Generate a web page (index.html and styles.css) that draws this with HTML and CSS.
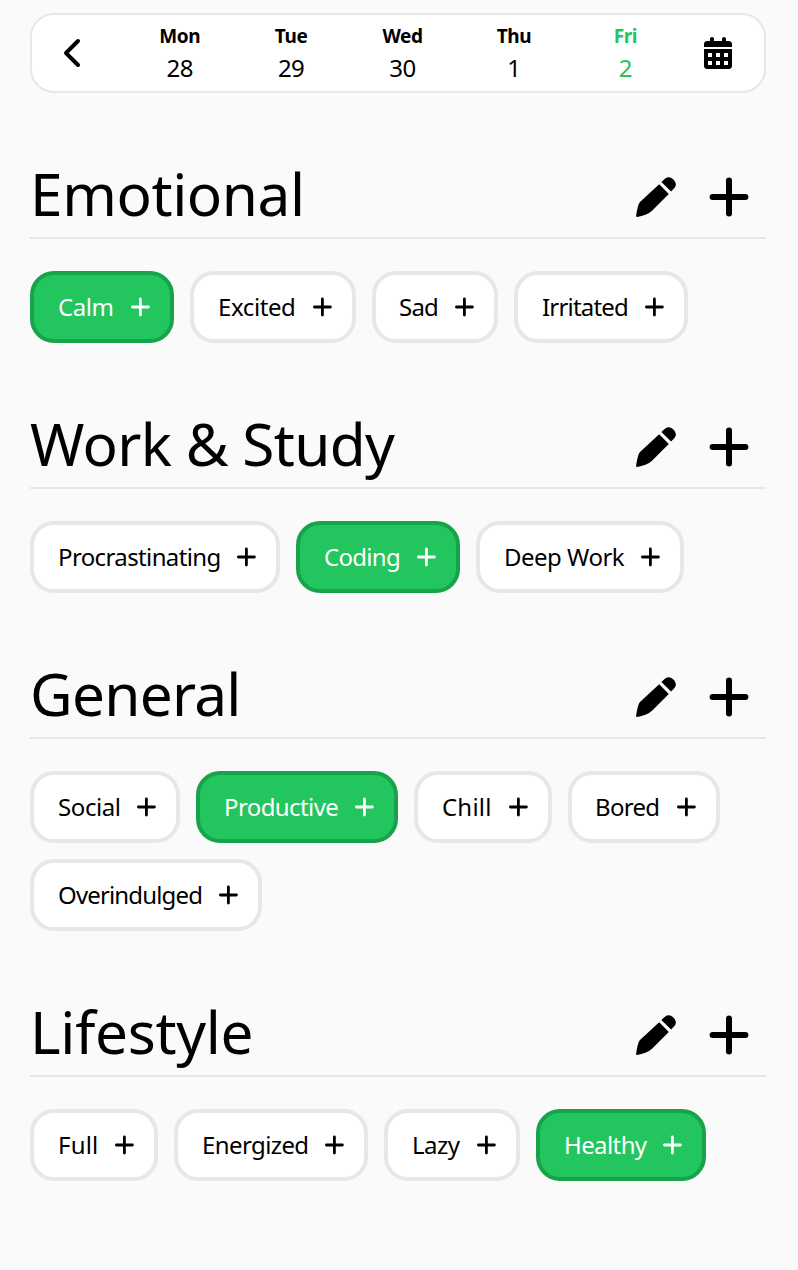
FILE: index.html
```html
<!DOCTYPE html>
<html lang="en">
<head>
<meta charset="utf-8">
<title>Mood tracker</title>
<link rel="stylesheet" href="styles.css">
</head>
<body>
<svg class="sprite" aria-hidden="true">
  <symbol id="plus" viewBox="0 0 20 20"><path d="M10.400 2V18M2.400 10H18.400" fill="none" stroke="currentColor" stroke-width="2.8" stroke-linecap="round"/></symbol>
  <symbol id="plus-lg" viewBox="0 0 40 40"><path d="M20 3.600V36.400M3.600 20H36.400" fill="none" stroke="currentColor" stroke-width="6" stroke-linecap="round"/></symbol>
  <symbol id="pencil" viewBox="0 0 40 40"><path d="M23.200 7.200L32.800 16.900L16 33.700C12.500 37 7 39 1.200 39.900Q-.1 40.100 .1 38.800C1 33.500 2 26.500 4.500 24.500ZM25.400 5L28.300 2.200C31.300-.6 34.500-.4 37.100 2.300C40.400 5.500 40.700 8.900 38 11.600L35.100 14.600Z"/></symbol>
</svg>
<main class="page">
  <nav class="week">
    <svg class="week-prev" viewBox="0 0 320 512"><path d="M9.400 233.400c-12.500 12.500-12.500 32.800 0 45.300l192 192c12.500 12.500 32.800 12.500 45.300 0s12.500-32.800 0-45.300L77.300 256 246.600 86.600c12.500-12.500 12.500-32.800 0-45.300s-32.800-12.500-45.300 0l-192 192z"/></svg>
    <div class="days">
      <div class="day"><b>Mon</b><span>28</span></div>
      <div class="day"><b>Tue</b><span>29</span></div>
      <div class="day"><b>Wed</b><span>30</span></div>
      <div class="day"><b>Thu</b><span>1</span></div>
      <div class="day today"><b>Fri</b><span>2</span></div>
    </div>
    <svg class="week-calendar" viewBox="0 0 448 512"><path fill-rule="evenodd" d="M128 0c17.700 0 32 14.300 32 32V64H288V32c0-17.700 14.300-32 32-32s32 14.300 32 32V64h48c26.500 0 48 21.500 48 48v48H0V112C0 85.500 21.500 64 48 64H96V32c0-17.700 14.300-32 32-32zM0 192H448V464c0 26.500-21.500 48-48 48H48c-26.500 0-48-21.500-48-48V192zM64 256v64h64v-64zM192 256v64h64v-64zM320 256v64h64v-64zM64 384v64h64v-64zM192 384v64h64v-64zM320 384v64h64v-64z"/></svg>
  </nav>

  <section class="group">
    <header class="group-head">
      <h2 class="t-emotional">Emotional</h2>
      <div class="actions"><svg><use href="#pencil"/></svg><svg><use href="#plus-lg"/></svg></div>
    </header>
    <div class="chips">
      <button class="chip on calm"><span>Calm</span><svg><use href="#plus"/></svg></button>
      <button class="chip excited"><span>Excited</span><svg><use href="#plus"/></svg></button>
      <button class="chip sad"><span>Sad</span><svg><use href="#plus"/></svg></button>
      <button class="chip irritated"><span>Irritated</span><svg><use href="#plus"/></svg></button>
    </div>
  </section>

  <section class="group">
    <header class="group-head">
      <h2 class="t-work">Work &amp; Study</h2>
      <div class="actions"><svg><use href="#pencil"/></svg><svg><use href="#plus-lg"/></svg></div>
    </header>
    <div class="chips">
      <button class="chip procrastinating"><span>Procrastinating</span><svg><use href="#plus"/></svg></button>
      <button class="chip on coding"><span>Coding</span><svg><use href="#plus"/></svg></button>
      <button class="chip deep-work"><span>Deep Work</span><svg><use href="#plus"/></svg></button>
    </div>
  </section>

  <section class="group">
    <header class="group-head">
      <h2 class="t-general">General</h2>
      <div class="actions"><svg><use href="#pencil"/></svg><svg><use href="#plus-lg"/></svg></div>
    </header>
    <div class="chips">
      <button class="chip social"><span>Social</span><svg><use href="#plus"/></svg></button>
      <button class="chip on productive"><span>Productive</span><svg><use href="#plus"/></svg></button>
      <button class="chip chill"><span>Chill</span><svg><use href="#plus"/></svg></button>
      <button class="chip bored"><span>Bored</span><svg><use href="#plus"/></svg></button>
      <button class="chip overindulged"><span>Overindulged</span><svg><use href="#plus"/></svg></button>
    </div>
  </section>

  <section class="group">
    <header class="group-head">
      <h2 class="t-lifestyle">Lifestyle</h2>
      <div class="actions"><svg><use href="#pencil"/></svg><svg><use href="#plus-lg"/></svg></div>
    </header>
    <div class="chips">
      <button class="chip full"><span>Full</span><svg><use href="#plus"/></svg></button>
      <button class="chip energized"><span>Energized</span><svg><use href="#plus"/></svg></button>
      <button class="chip lazy"><span>Lazy</span><svg><use href="#plus"/></svg></button>
      <button class="chip on healthy"><span>Healthy</span><svg><use href="#plus"/></svg></button>
    </div>
  </section>
</main>
</body>
</html>
```

FILE: styles.css
```css
* { box-sizing: border-box; }
body {
  margin: 0;
  background: #fafafa;
  color: #000;
  font-family: "Noto Sans", sans-serif;
}
.sprite { display: none; }
.page {
  min-height: 1270px;
  padding: 13px 32px 0 30px;
}

/* Week bar */
.week {
  display: flex;
  align-items: center;
  height: 80px;
  padding: 0 32px;
  border: 2px solid #e5e7eb;
  border-radius: 24px;
  background: #fff;
}
.week-prev { width: 20px; height: 32px; }
.week-calendar { width: 28px; height: 32px; margin-left: 23px; }
.days { display: flex; flex: 1; margin-left: 40px; padding-bottom: 2px; }
.day {
  display: flex;
  flex: 1;
  flex-direction: column;
  align-items: center;
  line-height: 32px;
}
.day b { font-size: 19px; letter-spacing: -.4px; }
.day span { font-size: 24px; letter-spacing: -.5px; }
.today { color: #22c55e; }

/* Groups */
.group { margin-top: 60px; }
.group-head {
  display: flex;
  align-items: center;
  justify-content: space-between;
  height: 86px;
  border-bottom: 2px solid #e5e7eb;
}
.group-head h2 {
  margin: 0;
  padding-bottom: 4px;
  font-size: 58.5px;
  font-weight: 400;
  line-height: 78px;
  white-space: nowrap;
}
.actions { display: flex; gap: 33px; padding: 4px 17px 0 0; }
.actions svg { display: block; width: 40px; height: 40px; }
.t-emotional { letter-spacing: -.4px; }
.t-work { letter-spacing: -.7px; }
.t-general { letter-spacing: -.7px; }
.t-lifestyle { letter-spacing: -.3px; }

/* Chips */
.chips { display: flex; flex-wrap: wrap; gap: 16px; margin-top: 32px; }
.chip {
  display: flex;
  align-items: center;
  justify-content: space-between;
  height: 72px;
  padding: 0 20px 0 24px;
  border: 4px solid #e5e7eb;
  border-radius: 24px;
  background: #fff;
  color: #000;
  font: 400 24px/32px "Noto Sans", sans-serif;
  white-space: nowrap;
}
.chip span { padding-bottom: 1px; }
.chip svg { flex: none; width: 20px; height: 20px; }
.chip.on { border-color: #16a34a; background: #22c55e; color: #fff; }

.calm { width: 144px; letter-spacing: -.4px; }
.excited { width: 166px; letter-spacing: -.4px; }
.sad { width: 126px; padding-left: 23px; letter-spacing: -.8px; }
.irritated { width: 174px; letter-spacing: -.8px; }
.procrastinating { width: 250px; letter-spacing: -.62px; }
.coding { width: 164px; letter-spacing: -.7px; }
.deep-work { width: 208px; letter-spacing: -.5px; }
.social { width: 150px; letter-spacing: -.4px; }
.productive { width: 202px; letter-spacing: -.6px; }
.chill { width: 138px; letter-spacing: .2px; }
.bored { width: 152px; padding-left: 23px; letter-spacing: -.7px; }
.overindulged { width: 232px; letter-spacing: -.85px; }
.full { width: 128px; letter-spacing: .2px; }
.energized { width: 194px; letter-spacing: -.6px; }
.lazy { width: 136px; letter-spacing: -.5px; }
.healthy { width: 170px; letter-spacing: -.6px; }
```
